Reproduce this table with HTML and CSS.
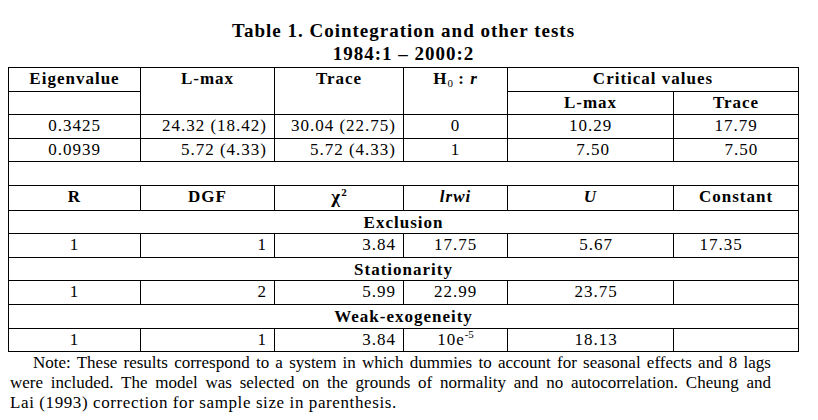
FILE: index.html
```html
<!DOCTYPE html>
<html>
<head>
<meta charset="utf-8">
<link rel="stylesheet" href="styles.css">
</head>
<body>
<div class="title">
  <div>Table 1. Cointegration and other tests</div>
  <div>1984:1 – 2000:2</div>
</div>
<table class="tests">
  <colgroup>
    <col class="c1"><col class="c2"><col class="c3"><col class="c4"><col class="c5"><col class="c6">
  </colgroup>
  <tr>
    <th>Eigenvalue</th>
    <th rowspan="2" class="top">L-max</th>
    <th rowspan="2" class="top">Trace</th>
    <th rowspan="2" class="top">H<sub class="sub">0</sub> : <i>r</i></th>
    <th colspan="2">Critical values</th>
  </tr>
  <tr>
    <td></td>
    <th>L-max</th>
    <th>Trace</th>
  </tr>
  <tr>
    <td>0.3425</td>
    <td class="r">24.32 (18.42)</td>
    <td class="r">30.04 (22.75)</td>
    <td>0</td>
    <td>10.29</td>
    <td>17.79</td>
  </tr>
  <tr>
    <td>0.0939</td>
    <td class="r">5.72 (4.33)</td>
    <td class="r">5.72 (4.33)</td>
    <td>1</td>
    <td>&nbsp;7.50</td>
    <td>&nbsp;&nbsp;7.50</td>
  </tr>
  <tr>
    <td colspan="6"></td>
  </tr>
  <tr>
    <th>R</th>
    <th>DGF</th>
    <th><span class="chi">χ</span><sup class="sup">2</sup></th>
    <th><i>lrwi</i></th>
    <th><i>U</i></th>
    <th>Constant</th>
  </tr>
  <tr>
    <th colspan="6" class="section">Exclusion</th>
  </tr>
  <tr>
    <td>1</td>
    <td class="r">1</td>
    <td class="r">3.84</td>
    <td>17.75</td>
    <td class="ushift">5.67</td>
    <td class="cshift">17.35</td>
  </tr>
  <tr>
    <th colspan="6" class="section">Stationarity</th>
  </tr>
  <tr>
    <td>1</td>
    <td class="r">2</td>
    <td class="r">5.99</td>
    <td>22.99</td>
    <td class="ushift">23.75</td>
    <td></td>
  </tr>
  <tr>
    <th colspan="6" class="section">Weak-exogeneity</th>
  </tr>
  <tr>
    <td>1</td>
    <td class="r">1</td>
    <td class="r">3.84</td>
    <td>10e<sup class="sup">-5</sup></td>
    <td class="ushift">18.13</td>
    <td></td>
  </tr>
</table>
<p class="note">
  <span class="ln first">Note: These results correspond to a system in which dummies to account for seasonal effects and 8 lags</span>
  <span class="ln">were included. The model was selected on the grounds of normality and no autocorrelation. Cheung and</span>
  <span class="last">Lai (1993) correction for sample size in parenthesis.</span>
</p>
</body>
</html>
```
FILE: styles.css
```css
body {
  margin: 8px;
  background: #fff;
  color: #000;
  font-family: "Liberation Serif", "Times New Roman", serif;
}

.title {
  width: 791px;
  margin: 11px 0 2px;
  text-align: center;
  font-weight: bold;
  font-size: 19px;
  line-height: 23px;
  letter-spacing: 1px;
}

.tests {
  border-collapse: collapse;
  table-layout: fixed;
  width: 791px;
  font-size: 17px;
  letter-spacing: 1px;
}

.c1 { width: 132px; }
.c2 { width: 134px; }
.c3 { width: 129px; }
.c4 { width: 104px; }
.c5 { width: 166px; }
.c6 { width: 125px; }

.tests td,
.tests th {
  border: 1px solid #000;
  padding: 0 7px;
  height: 22.6px;
  line-height: 22.6px;
  text-align: center;
  white-space: nowrap;
  font-weight: normal;
}

.tests th {
  font-weight: bold;
}

.tests th.top {
  vertical-align: top;
}

.tests .r {
  text-align: right;
}

.tests .section {
  padding-top: 2px;
  height: 20.6px;
  line-height: 20.6px;
}

.tests .ushift {
  padding-left: 18px;
}

.tests .cshift {
  padding-right: 37px;
}

.sub {
  font-size: 11px;
  font-weight: normal;
  vertical-align: -3px;
  line-height: 0;
  letter-spacing: 0;
}

.sup {
  font-size: 11px;
  vertical-align: 7px;
  line-height: 0;
  letter-spacing: 0;
}

.chi {
  font-size: 19px;
}

.note {
  width: 761px;
  margin: 1px 0 0 2px;
  font-size: 17px;
  line-height: 20px;
  letter-spacing: 0;
}

.note .ln {
  display: block;
  text-align: justify;
  text-align-last: justify;
}

.note .first {
  text-indent: 23px;
}

.note .last {
  display: block;
  letter-spacing: 0.6px;
}
```
